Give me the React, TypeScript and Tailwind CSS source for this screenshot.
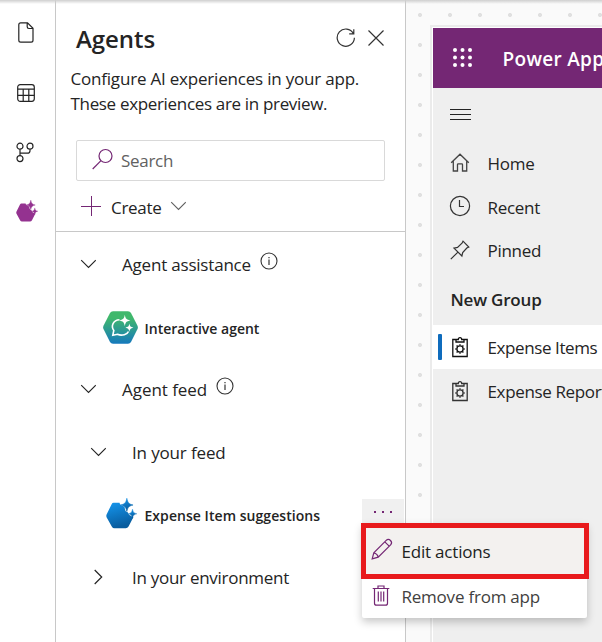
import type { ReactNode } from "react";

function Icon({ w, h, className = "", children }: { w: number; h: number; className?: string; children: ReactNode }) {
  return (
    <svg width={w} height={h} viewBox={`0 0 ${w} ${h}`} fill="none" stroke="currentColor" className={`block shrink-0 ${className}`}>
      {children}
    </svg>
  );
}

function AgentMark({ size, fill }: { size: number; fill: string }) {
  return (
    <svg width={size} height={size} viewBox="0 0 22 22" fill={fill} className="block shrink-0">
      <defs>
        <linearGradient id="blueMark" x1="0" y1="0" x2="0.3" y2="1">
          <stop offset="0" stopColor="#1597ef" />
          <stop offset="1" stopColor="#085c9e" />
        </linearGradient>
      </defs>
      <path d="M5.4 3.4H9.6C9.9 5.8 13 5.3 13.3 7 13.6 9.2 14.2 10 15.5 10.2 15.8 11.9 17 12.6 19.4 13.6L16 20.2Q15.3 21.5 14 21.5H6Q4.8 21.5 4.2 20.4L.4 13.6Q0 12.5 .5 11.5L4 4.4Q4.5 3.4 5.4 3.4Z" />
      <path d="M14.8 .2C15.5 3.5 16.2 4.2 19.2 5 16.2 5.8 15.5 6.5 14.8 9.6 14.1 6.5 13.4 5.8 10.3 5 13.4 4.2 14.1 3.5 14.8 .2Z" stroke={fill} strokeWidth="0.4" />
      <path d="M18.8 7.9C19.3 10.2 19.8 10.7 21.9 11.2 19.8 11.7 19.3 12.2 18.8 14.5 18.3 12.2 17.8 11.7 15.8 11.2 17.8 10.7 18.3 10.2 18.8 7.9Z" stroke={fill} strokeWidth="0.3" />
    </svg>
  );
}

function ChatMark() {
  return (
    <svg width="35" height="33" viewBox="0 0 35 33" className="block shrink-0">
      <defs>
        <linearGradient id="greenMark" x1="0" y1="0" x2="0" y2="1">
          <stop offset="0.2" stopColor="#40b86c" />
          <stop offset="1" stopColor="#1579bd" />
        </linearGradient>
      </defs>
      <path fill="url(#greenMark)" d="M10 .3H25Q27 .3 28 2L34.4 14.5Q35.3 16.5 34.4 18.3L28 31Q27 32.7 25 32.7H10Q8 32.7 7 31L.6 18.3Q-.3 16.5.6 14.5L7 2Q8 .3 10 .3Z" />
      <path d="M16.5 8.8C10 9 7.7 15.5 10.8 19.4L9.8 24.3 14.5 23.3C19 25.3 24.5 23.2 25.5 20.5" fill="none" stroke="#fff" strokeWidth="1.6" />
      <path fill="#fff" d="M21.8 3.8C22.6 8 23.4 8.6 27.4 9.5 23.4 10.4 22.6 11 21.8 15.2 21 11 20.2 10.4 16.1 9.5 20.2 8.6 21 8 21.8 3.8ZM26.4 12.6C27 15.5 27.6 16.1 30.4 16.7 27.6 17.3 27 17.9 26.4 20.8 25.8 17.9 25.2 17.3 22.4 16.7 25.2 16.1 25.8 15.5 26.4 12.6Z" />
    </svg>
  );
}

function Chevron({ className = "" }: { className?: string }) {
  return (
    <Icon w={16} h={10} className={className}>
      <path d="M1.2 1.2 8.5 8.4 15.8 1.2" strokeWidth="1.1" />
    </Icon>
  );
}

function Info() {
  return (
    <Icon w={18} h={18} className="text-[#333]">
      <circle cx="9" cy="9" r="8" strokeWidth="1.1" />
      <path d="M9 7.5V13M9 5V6.3" strokeWidth="1.2" />
    </Icon>
  );
}

function ClipIcon({ className }: { className: string }) {
  return (
    <Icon w={18} h={22} className={className}>
      <path d="M5 3.5H1.8V20.5H16.2V3.5H13M5 6V3.5H7.3C7.3.9 10.7.9 10.7 3.5H13V6Z" strokeWidth="1.3" />
      <circle cx="9" cy="13" r="3.1" strokeWidth="1.3" />
      <path d="M9 8.3V9.6M9 16.4V17.7M4.3 13H5.6M12.4 13H13.7M5.6 9.6 6.6 10.6M11.4 15.4 12.4 16.4M5.6 16.4 6.6 15.4M11.4 10.6 12.4 9.6" strokeWidth="1.4" />
    </Icon>
  );
}

function Rail() {
  return (
    <nav className="flex w-14 shrink-0 flex-col items-center border-r border-[#c8c8c8] pr-1 pt-[22px] text-[#242424]">
      <Icon w={16} h={21}>
        <path d="M3 .8H9.5L15 6.3V18.3Q15 20.2 13.1 20.2H2.7Q.8 20.2.8 18.3V2.7Q.8.8 2.7.8ZM9.2.8V4.8Q9.2 6.5 10.9 6.5H15" strokeWidth="1.2" />
      </Icon>
      <Icon w={18} h={18} className="mt-[41px]">
        <rect x=".7" y=".7" width="16.6" height="16.6" rx="2.5" strokeWidth="1.2" />
        <path d="M.7 5.2H17.3M.7 11.3H17.3M6.2 5.2V17M11.8 5.2V17" strokeWidth="1.2" />
      </Icon>
      <Icon w={18} h={21} className="mt-10 mr-px">
        <circle cx="4" cy="4.2" r="3" strokeWidth="1.2" />
        <circle cx="14" cy="4.2" r="3" strokeWidth="1.2" />
        <circle cx="4" cy="16.6" r="3" strokeWidth="1.2" />
        <path d="M4 7.2V13.6M4 11.2H11.5Q14 11.2 14 8.7V7.2" strokeWidth="1.2" />
      </Icon>
      <div className="ml-[2px] mt-[37px]">
        <AgentMark size={22} fill="#943290" />
      </div>
    </nav>
  );
}

function Section({ label, tracking, info, nested }: { label: string; tracking: string; info?: boolean; nested?: boolean }) {
  return (
    <div className={`flex h-6 items-center text-[17px] ${nested ? "pl-[34px]" : "pl-6"}`}>
      <Chevron className="-mt-[2px] mr-[26px]" />
      <span className={tracking}>{label}</span>
      {info && <div className="-mt-2 ml-[9px]"><Info /></div>}
    </div>
  );
}

function Menu() {
  return (
    <div className="absolute left-[362px] top-[499px] w-[225px] text-[17px]">
      <div className="flex h-6 w-[42px] items-center justify-center gap-[6px] bg-[#f0f0f0] pt-[2px]">
        <i className="size-[2px] bg-[#742774]" />
        <i className="size-[2px] bg-[#742774]" />
        <i className="size-[2px] bg-[#742774]" />
      </div>
      <div className="h-[95px] rounded-[2px] bg-white shadow-[0_4px_9px_rgba(0,0,0,0.22)]">
        <div className="-ml-px flex h-[56px] w-[228px] items-center border-5 border-[#e81a1c] bg-[#f3f1ef] pl-[5px] text-[#201f1e]">
          <Icon w={22} h={22} className="-mt-1 text-[#742774]">
            <path d="M1.2 20.8 2.8 14.8 15.2 2.4Q17.3.3 19.5 2.5 21.7 4.7 19.6 6.8L7.2 19.2ZM2.8 14.8Q6.4 15.6 7.2 19.2M13.8 3.8 18.2 8.2" strokeWidth="1.2" />
          </Icon>
          <span className="ml-[8.5px] mt-px tracking-[-0.2px]">Edit actions</span>
        </div>
        <div className="flex h-[36px] items-center pl-[10px] text-[#424140]">
          <Icon w={18} h={21} className="-mt-1 text-[#742774]">
            <path d="M.7 3.5H17.3M6 3.5V1H12V3.5M2.5 3.5V18.2Q2.5 20.2 4.5 20.2H13.5Q15.5 20.2 15.5 18.2V3.5M6.3 6.5V16.5M9 6.5V16.5M11.7 6.5V16.5" strokeWidth="1.2" />
          </Icon>
          <span className="ml-[11.5px] tracking-[-0.22px]">Remove from app</span>
        </div>
      </div>
    </div>
  );
}

function Panel() {
  return (
    <section className="flex w-[350px] shrink-0 flex-col border-r border-[#c8c8c8] text-[#242424]">
      <header className="mt-[11px] flex h-[38px] items-center pl-5 pt-[18px]">
        <h1 className="text-[24px] font-semibold leading-6 tracking-[-0.05px]">Agents</h1>
        <Icon w={20} h={20} className="-mt-[3px] ml-auto text-[#333]">
          <path d="M17.4 5.6A8.6 8.6 0 1 0 18.4 9.8M17.8 1.2V5.8H13.2" strokeWidth="1.2" />
        </Icon>
        <Icon w={16} h={16} className="-mt-[3px] ml-[12.5px] mr-[21px] text-[#333]">
          <path d="M.5.5 15.5 15.5M15.5.5.5 15.5" strokeWidth="1.2" />
        </Icon>
      </header>
      <p className="mt-[17px] whitespace-nowrap pl-[14.5px] text-[17px] leading-[25px]">
        <span className="block tracking-[-0.2px]">Configure AI experiences in your app.</span>
        <span className="block tracking-[-0.33px]">These experiences are in preview.</span>
      </p>
      <div className="ml-5 mt-6 flex h-[41px] w-[309px] items-center rounded-[2px] border border-[#d9d9d9] pl-[15px] text-[17px] text-[#616161]">
        <Icon w={22} h={22} className="-mt-1 text-[#742774]">
          <circle cx="13.5" cy="8" r="6.5" strokeWidth="1.2" />
          <path d="M9 12.7.7 21" strokeWidth="1.2" />
        </Icon>
        <span className="ml-[7px] mt-px tracking-[-0.3px]">Search</span>
      </div>
      <div className="flex h-[51px] items-center border-b border-[#c8c8c8] pl-[25px] text-[17px]">
        <Icon w={20} h={20} className="text-[#742774]">
          <path d="M0 10.5H20M10.5 0V20" strokeWidth="1" />
        </Icon>
        <span className="ml-[10px] mt-[3px] tracking-[-0.3px]">Create</span>
        <Chevron className="ml-[9px] text-[#616161]" />
      </div>
      <div className="mt-[21px]"><Section label="Agent assistance" tracking="tracking-[-0.2px]" info /></div>
      <div className="mt-8 flex h-[36px] items-center pl-[47px] text-[14px] font-semibold">
        <ChatMark />
        <span className="ml-[6.5px] mt-[3px]">Interactive agent</span>
      </div>
      <div className="mt-[33px]"><Section label="Agent feed" tracking="tracking-[-0.05px]" info /></div>
      <div className="mt-[39px]"><Section label="In your feed" tracking="tracking-[-0.15px]" nested /></div>
      <div className="mt-[30px] flex h-[36px] items-center pl-[50px] text-[14px] font-semibold">
        <AgentMark size={31} fill="url(#blueMark)" />
        <span className="ml-[7.5px] mt-[5px] tracking-[0.05px]">Expense Item suggestions</span>
      </div>
      <div className="mt-[35px] flex h-6 items-center pl-[38px] text-[17px]">
        <Icon w={10} h={16} className="-mt-[2px]"><path d="M.7 1 7.7 8 .7 15" strokeWidth="1.2" /></Icon>
        <span className="ml-[28px] tracking-[-0.28px]">In your environment</span>
      </div>
    </section>
  );
}

function NavRow({ icon, label, tracking }: { icon: ReactNode; label: string; tracking: string }) {
  return (
    <div className="flex h-11 items-center">
      <div className="flex w-[54.5px] justify-center">{icon}</div>
      <span className={`mt-[2px] whitespace-nowrap ${tracking}`}>{label}</span>
    </div>
  );
}

function Preview() {
  return (
    <main className="flex-1 overflow-hidden bg-[#fafafa] bg-[radial-gradient(circle_at_14px_15px,#e0e0e0_1.6px,transparent_2.4px)] bg-[length:30px_30px] pl-6 pt-[25px]">
      <div className="h-full w-[300px] border-l-2 border-t-2 border-[#ebebeb] bg-white pl-px pt-px text-[#242424]">
        <div className="h-full bg-[#efefef] text-[17px]">
          <div className="flex h-[60px] items-center bg-[#742774] pl-5 text-white">
            <svg width="19" height="19" fill="currentColor" className="-mt-[2px]">
              {[2, 9.5, 17].map((x) => [2, 9.5, 17].map((y) => <circle key={`${x}-${y}`} cx={x} cy={y} r="2" />))}
            </svg>
            <span className="ml-[30.5px] mt-[2px] whitespace-nowrap text-[19px] font-semibold tracking-[0.3px]">Power Apps</span>
          </div>
          <div className="flex h-[53px] items-center pl-[17px]">
            <Icon w={21} h={12}><path d="M0 .5H21M0 5.5H21M0 10.5H21" strokeWidth="1" /></Icon>
          </div>
          <NavRow label="Home" tracking="tracking-[-0.25px]" icon={<Icon w={20} h={20} className="-mt-px text-[#444]"><path d="M1.2 9.8 10 1.2 18.8 9.8M3.3 8V18H7.5V11.5Q7.5 10.8 8.2 10.8H11.8Q12.5 10.8 12.5 11.5V18H16.7V8" strokeWidth="1.3" /></Icon>} />
          <NavRow label="Recent" tracking="tracking-[-0.3px]" icon={<Icon w={22} h={22} className="-mt-[2px] text-[#333]"><circle cx="11" cy="11" r="9.6" strokeWidth="1.2" /><path d="M10.5 5V11.5H15" strokeWidth="1.2" /></Icon>} />
          <div className="-mt-px">
            <NavRow label="Pinned" tracking="tracking-[-0.3px]" icon={<Icon w={20} h={20} className="text-[#333]"><path d="M13 1.2 18.8 7 16.8 8 12.7 12.5 11.9 16 4 8.2 7.5 7.4 12 3.2ZM7.7 12.3.8 19.2" strokeWidth="1.2" /></Icon>} />
          </div>
          <div className="flex h-[53px] items-center pl-[17.5px] pt-[2px] font-semibold tracking-[-0.2px]">New Group</div>
          <div className="relative bg-white">
            <i className="absolute left-[5px] top-[9px] h-[26px] w-1 rounded-[1px] bg-[#0f6cbd]" />
            <NavRow label="Expense Items" tracking="tracking-[-0.4px]" icon={<ClipIcon className="text-[#111]" />} />
          </div>
          <NavRow label="Expense Reports" tracking="tracking-[-0.35px]" icon={<ClipIcon className="text-[#333]" />} />
        </div>
      </div>
    </main>
  );
}

export default function App() {
  return (
    <div className="relative flex h-[642px] w-[602px] overflow-hidden bg-white font-['Open_Sans','Noto_Sans',sans-serif]">
      <Rail />
      <Panel />
      <Preview />
      <div className="absolute inset-x-0 top-0 h-[4px] bg-linear-to-b from-[#cfcfcf] to-transparent" />
      <Menu />
    </div>
  );
}
